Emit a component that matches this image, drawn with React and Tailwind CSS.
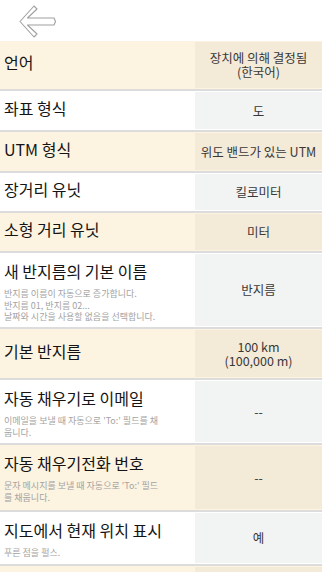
import React from "react";

const FONT = { fontFamily: '"Noto Sans CJK KR", "Noto Sans", sans-serif' };

function Row({ h, cream, title, desc, value }) {
  return (
    <div
      className={`flex ${h} border-b-2 border-[#dcdcdc] ${cream ? "bg-[#fdf3e1]" : "bg-white"}`}
    >
      <div
        className={`flex-1 min-w-0 flex flex-col pl-[4px] pr-1 ${
          desc ? "justify-start pt-[7px]" : "justify-center pb-[6px]"
        }`}
      >
        <div className="text-[16px] leading-[22px] text-[#141414]">{title}</div>
        {desc && (
          <div className="mt-[6px] text-[9px] leading-[11.5px] text-[#a3a3a3] whitespace-nowrap">
            {desc.map((l, i) => (
              <div key={i}>{l}</div>
            ))}
          </div>
        )}
      </div>
      <div
        className={`w-[127px] shrink-0 my-px flex flex-col items-center justify-center text-center text-[12.5px] leading-[14px] text-[#383838] ${
          cream ? "bg-[#f4ead8]" : "bg-[#f2f3f3]"
        }`}
      >
        {value.map((l, i) => (
          <div key={i}>{l}</div>
        ))}
      </div>
    </div>
  );
}

export default function App() {
  return (
    <div className="w-[322px] bg-white" style={FONT}>
      <div className="h-[41px] flex items-center pl-[18px]">
        <svg width="40" height="36" viewBox="18 2 40 36" fill="none">
          <polygon
            points="20,20.5 34,5 37,8 27.5,17 54,17 55.5,20.5 54,24 27.5,24 37,33 34,36"
            stroke="#a0a0a0"
            strokeWidth="1.1"
            strokeLinejoin="round"
          />
        </svg>
      </div>
      <Row h="h-[50px]" cream title="언어" value={["장치에 의해 결정됨", "(한국어)"]} />
      <Row h="h-[41px]" title="좌표 형식" value={["도"]} />
      <Row h="h-[41px]" cream title="UTM 형식" value={["위도 밴드가 있는 UTM"]} />
      <Row h="h-[40px]" title="장거리 유닛" value={["킬로미터"]} />
      <Row h="h-[40px]" cream title="소형 거리 유닛" value={["미터"]} />
      <Row
        h="h-[76px]"
        title="새 반지름의 기본 이름"
        desc={[
          "반지름 이름이 자동으로 증가합니다.",
          "반지름 01, 반지름 02...",
          "날짜와 시간을 사용할 없음을 선택합니다.",
        ]}
        value={["반지름"]}
      />
      <Row h="h-[51px]" cream title="기본 반지름" value={["100 km", "(100,000 m)"]} />
      <Row
        h="h-[65px]"
        title="자동 채우기로 이메일"
        desc={["이메일을 보낼 때 자동으로 'To:' 필드를 채", "웁니다."]}
        value={["--"]}
      />
      <Row
        h="h-[67px]"
        cream
        title="자동 채우기전화 번호"
        desc={["문자 메시지를 보낼 때 자동으로 'To:' 필드", "를 채웁니다."]}
        value={["--"]}
      />
      <Row
        h="h-[54px]"
        title="지도에서 현재 위치 표시"
        desc={["푸른 점을 펄스."]}
        value={["예"]}
      />
      <div className="flex h-[41px] bg-[#fdf3e1]">
        <div className="flex-1" />
        <div className="w-[127px] shrink-0 mt-px bg-[#f4ead8]" />
      </div>
    </div>
  );
}
